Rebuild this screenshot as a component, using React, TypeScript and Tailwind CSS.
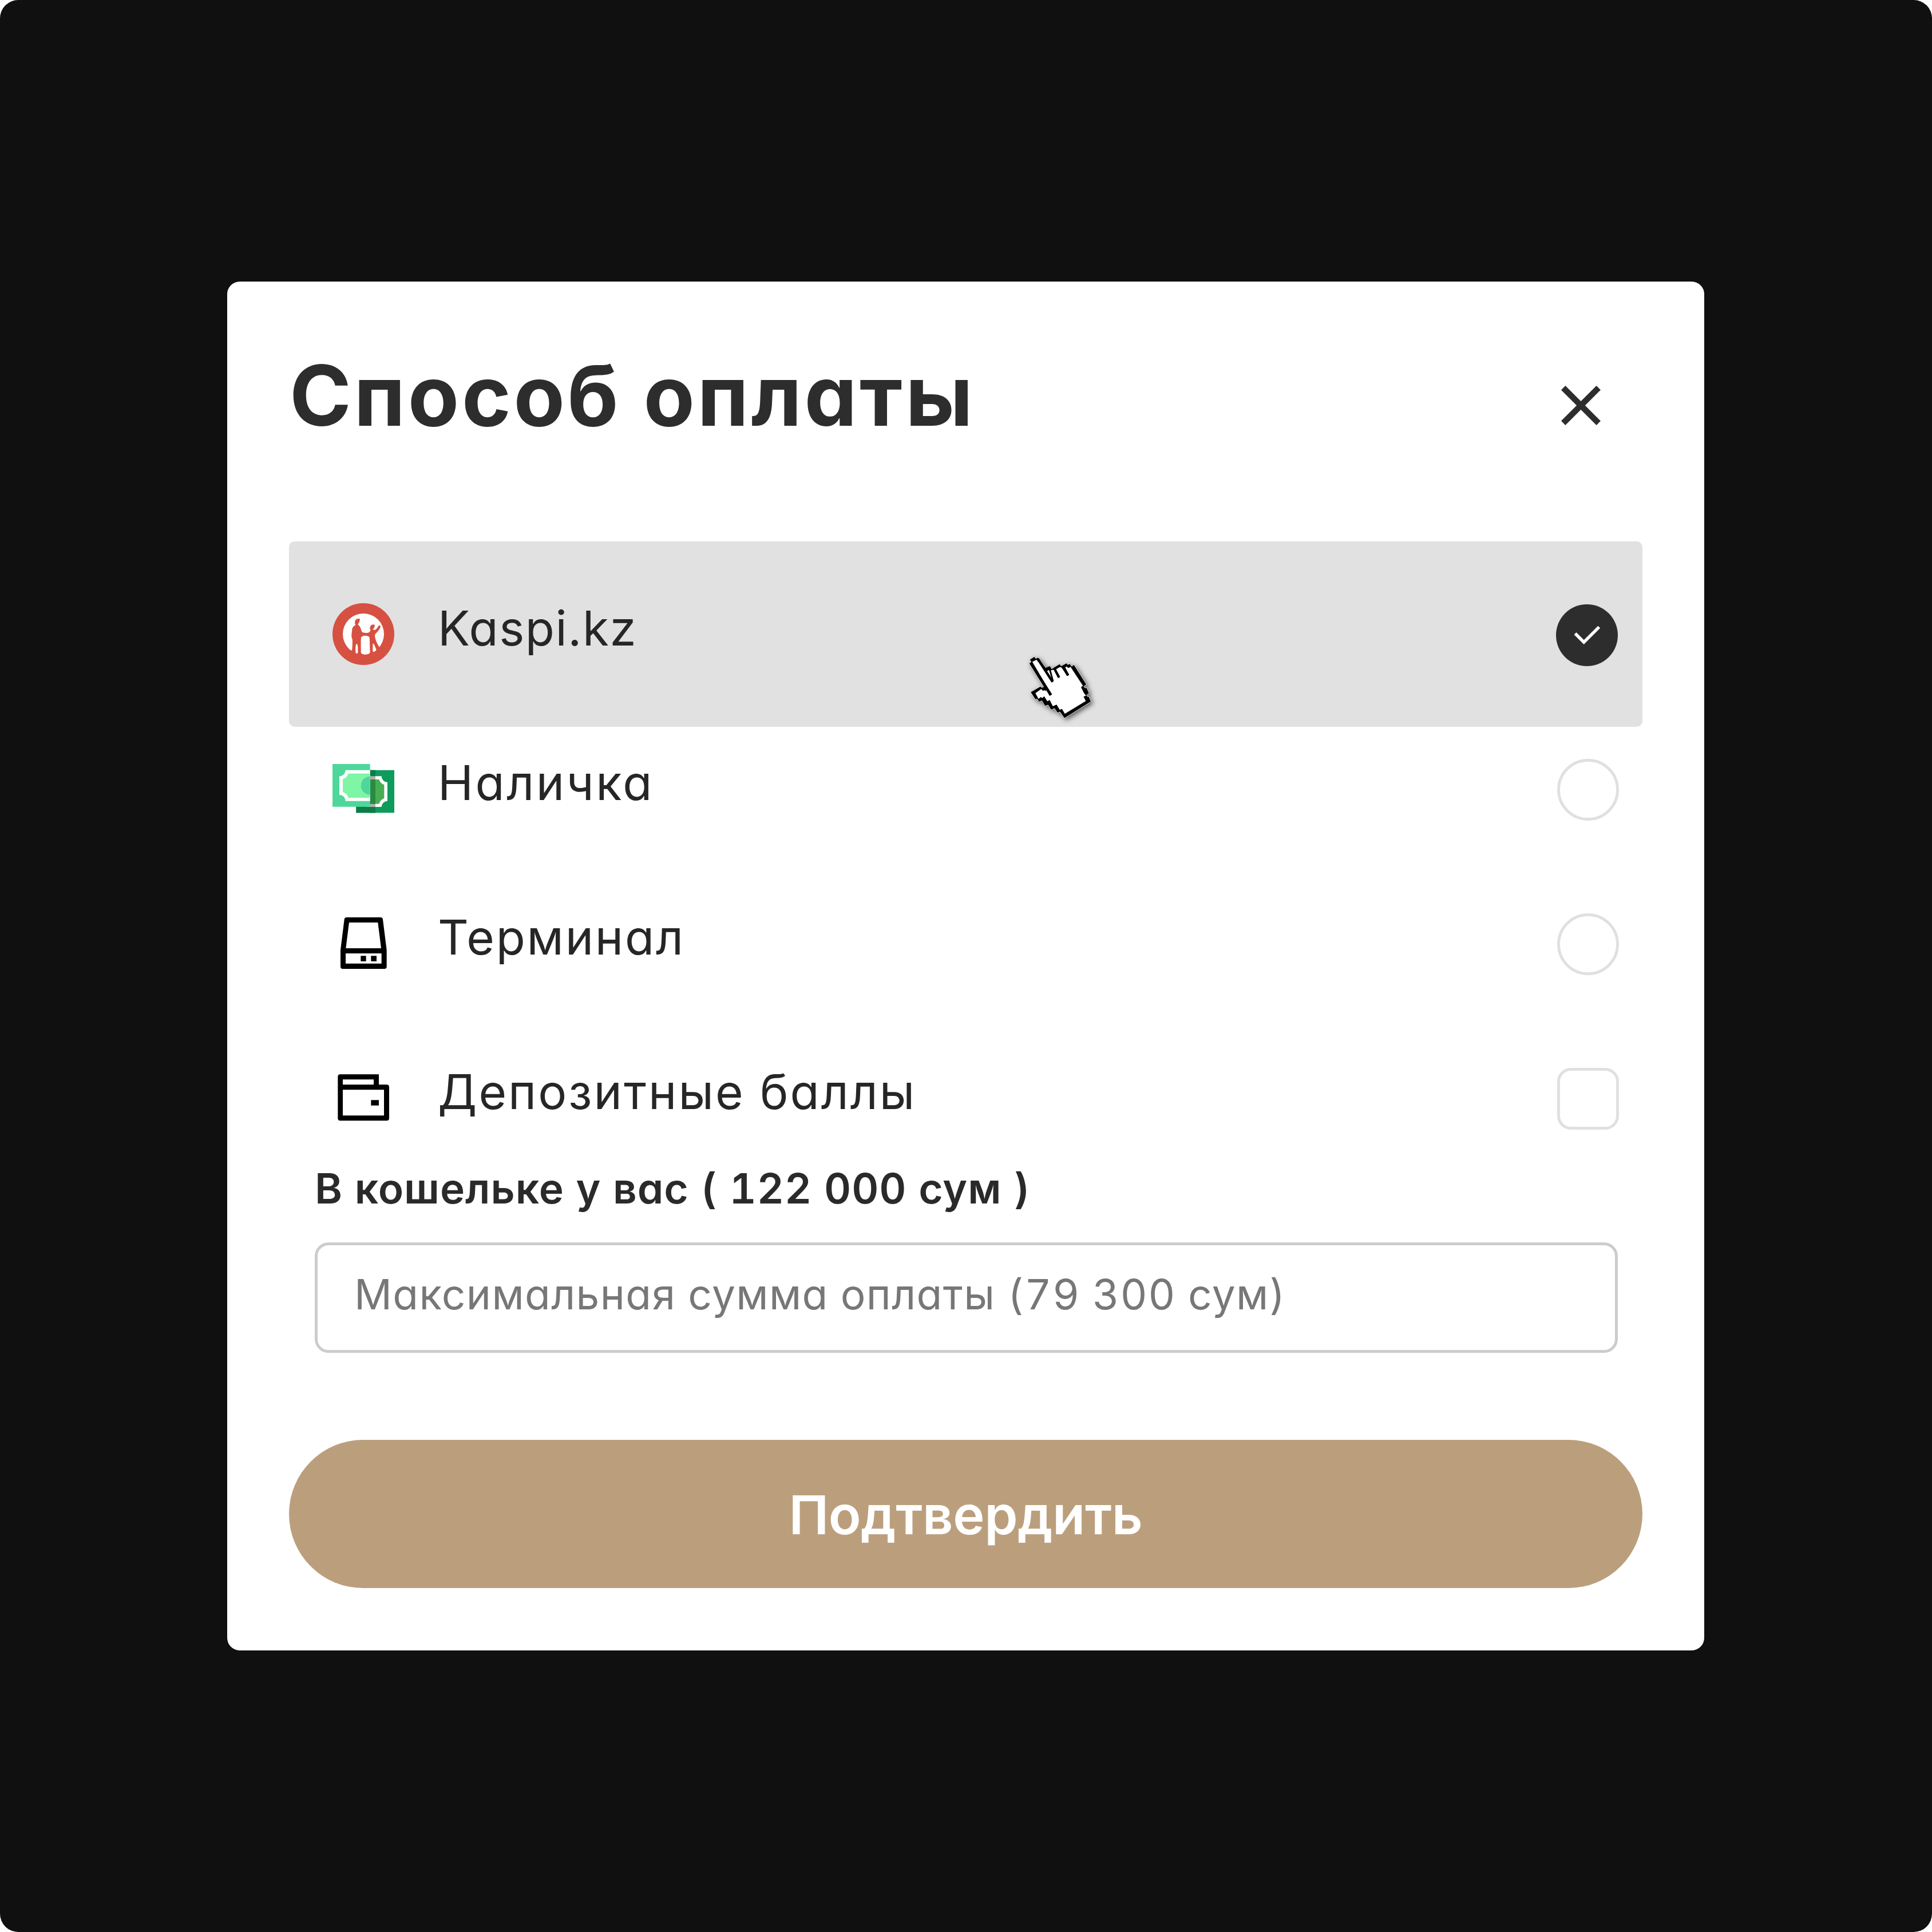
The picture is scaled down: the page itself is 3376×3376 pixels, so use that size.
import type { ReactNode } from "react";

function KaspiIcon() {
  return (
    <svg viewBox="63 72 324 324" className="size-[108px] shrink-0">
      <circle cx="225" cy="234" r="162" fill="#d65141" />
      <circle cx="225" cy="234" r="108" fill="#fff" />
      <path
        fill="#d65141"
        d="M165 319C168 300 168 275 167 262C162 250 162 238 164 228C166 218 165 208 168 202C172 192 178 190 184 187C179 180 179 168 184 160C189 153 199 151 206 154C207 163 204 176 196 182C199 188 206 191 209 199C212 208 214 216 218 223C226 229 246 230 256 224C261 220 262 216 262 211C257 206 259 195 264 189C270 182 278 183 284 185C285 195 282 204 274 209C278 213 287 213 291 209C298 203 300 196 306 190C311 187 316 190 315 196C311 208 302 219 293 228C285 234 283 242 286 250C290 268 297 285 304 294L310 309L330 320L290 380H160L130 330Z"
      />
      <path
        fill="#fff"
        d="M189 285C195 287 197 300 196 312C197 322 197 333 193 336C188 338 183 333 184 325C184 312 183 292 189 285ZM213 251C220 239 250 239 257 251C259 275 258 305 260 328C260 345 213 345 212 329C213 303 210 275 213 251ZM274 285C280 282 284 294 293 316C290 325 279 329 275 327C273 315 275 302 274 285Z"
      />
    </svg>
  );
}

function CashIcon() {
  return (
    <svg viewBox="63 42 324 324" className="size-[108px] shrink-0">
      <path fill="#0f9b5c" d="M187 107H387V331H187Z" />
      <path fill="#fff" d="M240 139H320A32 32 0 0 0 351 171V269A32 32 0 0 0 320 300H240Z" />
      <path fill="#47ae54" d="M240 156H307A44 44 0 0 0 334 184V255A44 44 0 0 0 307 284H240Z" />
      <path fill="#0b7d46" d="M260 107H288V331H260Z" />
      <path fill="#0b7d46" d="M187 299H288V331H187Z" />
      <path fill="#b0aead" d="M260 139H288V156H260ZM260 284H288V300H260Z" />
      <path fill="#2a8a43" d="M260 156H288V284H260Z" />
      <path fill="#4fd79b" d="M63 75H260V299H63Z" />
      <path fill="#fff" d="M260 107H131A32 32 0 0 1 99 139V237A32 32 0 0 1 131 269H260Z" />
      <path fill="#7ff5a6" d="M260 125H146A46 46 0 0 1 117 154V222A46 46 0 0 1 146 252H260Z" />
      <path fill="#4fd79b" d="M260 140A48 48 0 0 0 260 236Z" />
    </svg>
  );
}

function TerminalIcon() {
  return (
    <svg viewBox="33 42 324 324" className="size-[108px] shrink-0">
      <path
        fillRule="evenodd"
        d="M107 69H285Q296 69 297 80L317 240V327Q317 339 305 339H87Q75 339 75 327V240L95 80Q96 69 107 69ZM120 96L103 231H288L271 96ZM102 258V311H290V258ZM181 271H209V299H181ZM235 271H264V299H235Z"
      />
    </svg>
  );
}

function WalletIcon() {
  return (
    <svg viewBox="33 42 324 324" className="size-[108px] shrink-0">
      <path
        fillRule="evenodd"
        d="M74 82H276V136H317Q330 136 330 149V312Q330 325 317 325H74Q61 325 61 312V95Q61 82 74 82ZM87 109V136H249V109ZM87 163V298H303V163ZM235 217H276V245H235Z"
      />
    </svg>
  );
}

function CloseIcon() {
  return (
    <svg viewBox="0 0 69 69" className="size-[69px]" stroke="#2d2d2d" strokeWidth="10.4">
      <path d="M3.7 3.7L65.3 65.3M65.3 3.7L3.7 65.3" />
    </svg>
  );
}

function HandCursor() {
  return (
    <svg
      viewBox="0 0 510 480"
      className="pointer-events-none absolute top-[174px] left-[1265px] h-[160px] w-[170px] drop-shadow-[3px_3px_4px_rgba(0,0,0,0.6)]"
    >
      <path
        fill="#000"
        stroke="#fff"
        strokeWidth="2.5"
        d="M84 117L95 110L88 97L112 82L120 92L131 86L176 145L197 133L203 146L246 121L252 131L281 116L287 124L298 119L308 133L320 124L386 228L372 238L378 247L386 243L400 274L386 284L392 292L398 290L410 318L270 406L246 372L234 378L218 354L200 362L184 336L168 342L152 314L137 320L126 304L118 308L92 268L144 238L154 246L161 241Z"
      />
      <path
        fill="#fff"
        d="M99 112L123 99L176 160L189 152L208 215L214 210L199 154L218 150L236 192L246 187L221 148L246 136L262 144L282 182L294 176L274 138L282 134L290 142L302 136L367 235L357 242L372 272L383 287L370 292L382 315L272 382L257 356L245 361L229 334L209 342L193 310L180 316L164 290L154 299L146 294L134 304L118 274L148 252L158 262L174 252L192 286L206 280Z"
      />
      <path fill="#fff" d="M99 112L123 99L210 215L300 190L340 240L250 340L192 290L206 280Z" />
      <path
        fill="none"
        stroke="#000"
        strokeWidth="13"
        d="M130 93L208 215M168 150L196 138M96 113L198 285M176 256L154 248M217 144L242 192M214 148L248 128M260 135L290 181M258 140L284 123M288 128L298 136"
      />
    </svg>
  );
}

function CheckedMark() {
  return (
    <svg viewBox="0 0 108 108" className="mt-1 mr-[43px] size-[108px] shrink-0">
      <circle cx="54" cy="54" r="54" fill="#2d2d2d" />
      <path d="M33.5 51L48.7 66.2L75.3 39.6" fill="none" stroke="#fff" strokeWidth="5.5" />
    </svg>
  );
}

const Radio = () => (
  <span className="mt-1 mr-[41px] size-[108px] shrink-0 rounded-full border-[5px] border-[#e0e0e0]" />
);

const Checkbox = () => (
  <span className="mt-1 mr-[41px] size-[108px] shrink-0 rounded-[24px] border-[5px] border-[#e0e0e0]" />
);

function Row({
  icon,
  label,
  tracking,
  control,
  className = "h-[216px]",
  children,
}: {
  icon: ReactNode;
  label: string;
  tracking: string;
  control: ReactNode;
  className?: string;
  children?: ReactNode;
}) {
  return (
    <div className={`relative flex items-center pl-[76px] ${className}`}>
      {icon}
      <span
        className={`ml-[76px] flex-1 pb-[21px] text-[83.5px] leading-[100px] whitespace-nowrap text-[#262626] ${tracking}`}
      >
        {label}
      </span>
      {control}
      {children}
    </div>
  );
}

export default function App() {
  return (
    <div className="bg-white">
      <main className="flex h-[3376px] w-[3376px] items-center justify-center rounded-[32px] bg-[#101010] font-['Inter',sans-serif] [font-feature-settings:'cv11']">
        <section className="mr-px flex h-[2392px] w-[2581px] flex-col rounded-[22px] bg-white px-[108px]">
          <header className="flex h-[454px] items-start justify-between">
            <h1 className="pt-[119px] pl-px text-[146px] leading-[160px] font-bold tracking-[4.6px] whitespace-nowrap text-[#2d2d2d]">
              Способ оплаты
            </h1>
            <button aria-label="Закрыть" className="mt-[182px] mr-[73px]">
              <CloseIcon />
            </button>
          </header>

          <div className="flex flex-col">
            <Row
              icon={<KaspiIcon />}
              label="Kaspi.kz"
              tracking="tracking-[1.6px]"
              control={<CheckedMark />}
              className="h-[324px] rounded-[10px] bg-[#e1e1e1]"
            >
              <HandCursor />
            </Row>
            <div className="flex flex-col gap-[54px]">
              <Row icon={<CashIcon />} label="Наличка" tracking="tracking-[3.5px]" control={<Radio />} />
              <Row icon={<TerminalIcon />} label="Терминал" tracking="tracking-[2.8px]" control={<Radio />} />
              <Row
                icon={<WalletIcon />}
                label="Депозитные баллы"
                tracking="tracking-[3px]"
                control={<Checkbox />}
              />
            </div>
          </div>

          <div className="flex flex-col pr-[43px] pl-[45px]">
            <label
              htmlFor="amount"
              className="text-[73px] leading-[102px] font-semibold tracking-[1px] whitespace-nowrap text-[#2a2a2a] [font-feature-settings:'cv11','tnum']"
            >
              В кошельке у вас ( 122 000 сум )
            </label>
            <input
              id="amount"
              placeholder="Максимальная сумма оплаты (79 300 сум)"
              className="mt-[43px] h-[193px] rounded-[24px] border-[5px] border-[#cccccc] pb-[12px] pl-[64px] text-[73px] tracking-[1.4px] [font-feature-settings:'cv11','tnum'] placeholder:text-[#777777]"
            />
          </div>

          <button className="mt-[152px] h-[259px] rounded-full bg-[#bb9f7d] pt-[4px] text-[93.5px] font-semibold tracking-[-0.35px] text-white">
            Подтвердить
          </button>
        </section>
      </main>
    </div>
  );
}
